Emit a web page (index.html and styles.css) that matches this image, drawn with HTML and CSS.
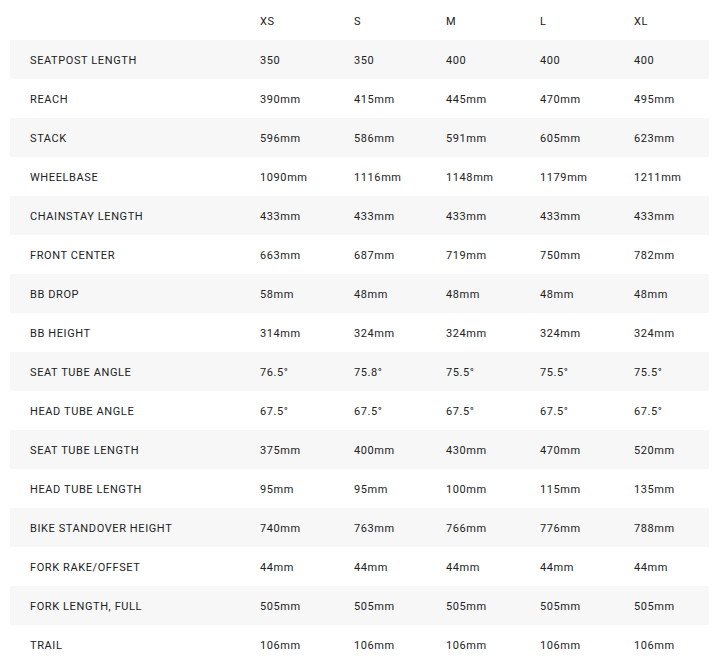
FILE: index.html
```html
<!DOCTYPE html>
<html>
<head>
<meta charset="utf-8">
<link rel="stylesheet" href="styles.css">
</head>
<body>
<div class="table">
  <div class="row head"><div class="label"></div><div>XS</div><div>S</div><div>M</div><div>L</div><div>XL</div></div>
  <div class="row"><div class="label">SEATPOST LENGTH</div><div>350</div><div>350</div><div>400</div><div>400</div><div>400</div></div>
  <div class="row"><div class="label">REACH</div><div>390mm</div><div>415mm</div><div>445mm</div><div>470mm</div><div>495mm</div></div>
  <div class="row"><div class="label">STACK</div><div>596mm</div><div>586mm</div><div>591mm</div><div>605mm</div><div>623mm</div></div>
  <div class="row"><div class="label">WHEELBASE</div><div>1090mm</div><div>1116mm</div><div>1148mm</div><div>1179mm</div><div>1211mm</div></div>
  <div class="row"><div class="label">CHAINSTAY LENGTH</div><div>433mm</div><div>433mm</div><div>433mm</div><div>433mm</div><div>433mm</div></div>
  <div class="row"><div class="label">FRONT CENTER</div><div>663mm</div><div>687mm</div><div>719mm</div><div>750mm</div><div>782mm</div></div>
  <div class="row"><div class="label">BB DROP</div><div>58mm</div><div>48mm</div><div>48mm</div><div>48mm</div><div>48mm</div></div>
  <div class="row"><div class="label">BB HEIGHT</div><div>314mm</div><div>324mm</div><div>324mm</div><div>324mm</div><div>324mm</div></div>
  <div class="row"><div class="label">SEAT TUBE ANGLE</div><div>76.5°</div><div>75.8°</div><div>75.5°</div><div>75.5°</div><div>75.5°</div></div>
  <div class="row"><div class="label">HEAD TUBE ANGLE</div><div>67.5°</div><div>67.5°</div><div>67.5°</div><div>67.5°</div><div>67.5°</div></div>
  <div class="row"><div class="label">SEAT TUBE LENGTH</div><div>375mm</div><div>400mm</div><div>430mm</div><div>470mm</div><div>520mm</div></div>
  <div class="row"><div class="label">HEAD TUBE LENGTH</div><div>95mm</div><div>95mm</div><div>100mm</div><div>115mm</div><div>135mm</div></div>
  <div class="row"><div class="label">BIKE STANDOVER HEIGHT</div><div>740mm</div><div>763mm</div><div>766mm</div><div>776mm</div><div>788mm</div></div>
  <div class="row"><div class="label">FORK RAKE/OFFSET</div><div>44mm</div><div>44mm</div><div>44mm</div><div>44mm</div><div>44mm</div></div>
  <div class="row"><div class="label">FORK LENGTH, FULL</div><div>505mm</div><div>505mm</div><div>505mm</div><div>505mm</div><div>505mm</div></div>
  <div class="row"><div class="label">TRAIL</div><div>106mm</div><div>106mm</div><div>106mm</div><div>106mm</div><div>106mm</div></div>
</div>
</body>
</html>
```
FILE: styles.css
```css
html, body {
  margin: 0;
  padding: 0;
  background: #fff;
}
body {
  font-family: Roboto, "Liberation Sans", sans-serif;
  font-size: 11px;
  color: #222;
}
.table {
  margin: 0 14px 0 10px;
}
.row {
  box-sizing: border-box;
  display: grid;
  grid-template-columns: 250px 94px 92px 94px 94px 1fr;
  height: 39px;
  padding-top: 2px;
  align-items: center;
  letter-spacing: 0.6px;
}
.row.head {
  height: 40px;
}
.row:nth-child(even) {
  background: #f7f7f7;
}
.label {
  padding-left: 20px;
  letter-spacing: 0.6px;
}
```
